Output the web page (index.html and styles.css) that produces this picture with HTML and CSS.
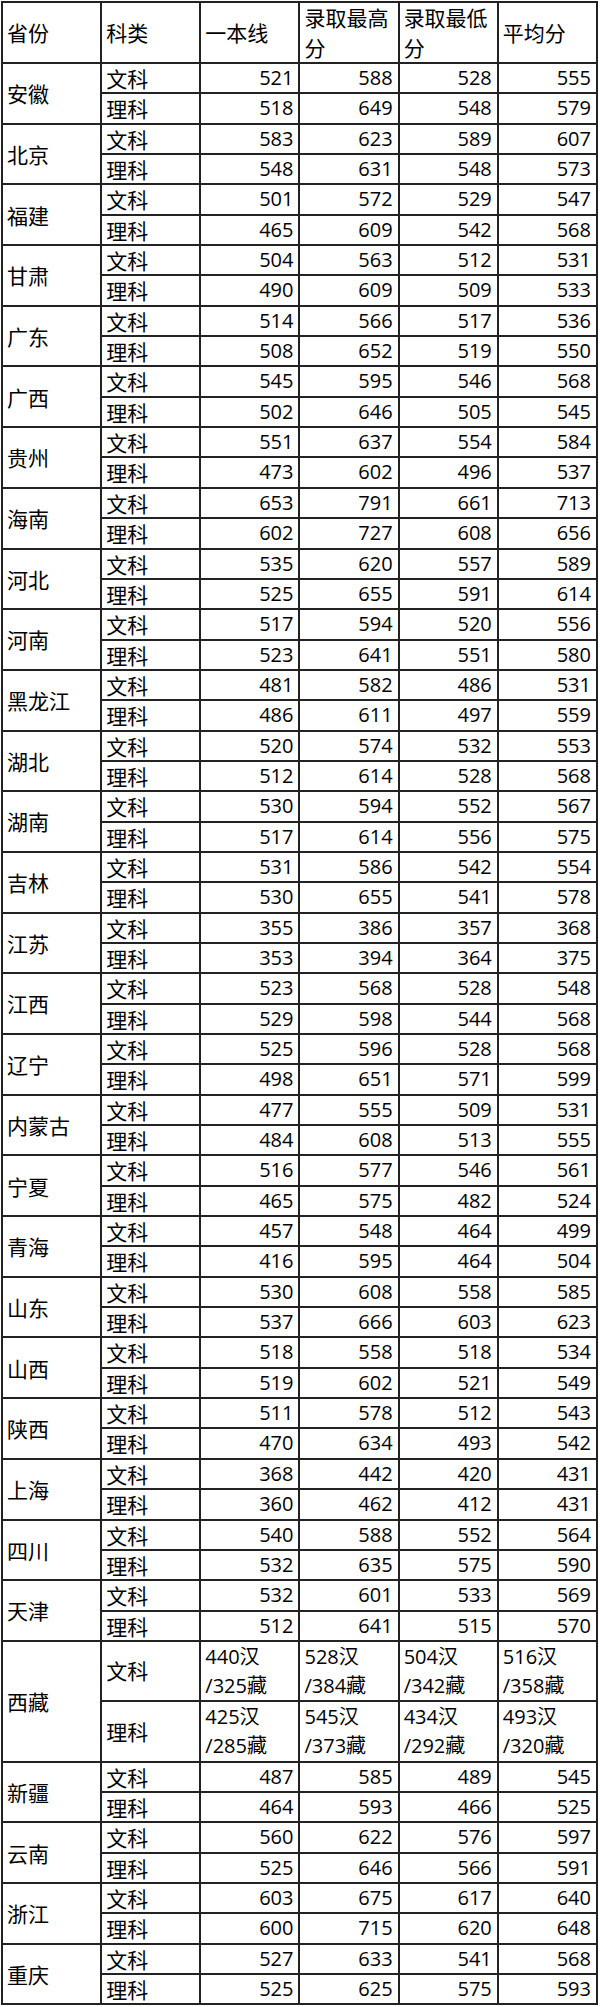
FILE: index.html
```html
<!DOCTYPE html>
<html lang="zh-CN">
<head>
<meta charset="utf-8">
<title>各省录取分数</title>
<link rel="stylesheet" href="styles.css">
</head>
<body>
<table class="scores">
<colgroup><col><col><col><col><col><col></colgroup>
<thead>
<tr class="head"><th>省份</th><th>科类</th><th>一本线</th><th>录取最高分</th><th>录取最低分</th><th>平均分</th></tr>
</thead>
<tbody>
<tr><td class="prov" rowspan="2">安徽</td><td class="zh">文科</td><td>521</td><td>588</td><td>528</td><td>555</td></tr>
<tr><td class="zh">理科</td><td>518</td><td>649</td><td>548</td><td>579</td></tr>
<tr><td class="prov" rowspan="2">北京</td><td class="zh">文科</td><td>583</td><td>623</td><td>589</td><td>607</td></tr>
<tr><td class="zh">理科</td><td>548</td><td>631</td><td>548</td><td>573</td></tr>
<tr><td class="prov" rowspan="2">福建</td><td class="zh">文科</td><td>501</td><td>572</td><td>529</td><td>547</td></tr>
<tr><td class="zh">理科</td><td>465</td><td>609</td><td>542</td><td>568</td></tr>
<tr><td class="prov" rowspan="2">甘肃</td><td class="zh">文科</td><td>504</td><td>563</td><td>512</td><td>531</td></tr>
<tr><td class="zh">理科</td><td>490</td><td>609</td><td>509</td><td>533</td></tr>
<tr><td class="prov" rowspan="2">广东</td><td class="zh">文科</td><td>514</td><td>566</td><td>517</td><td>536</td></tr>
<tr><td class="zh">理科</td><td>508</td><td>652</td><td>519</td><td>550</td></tr>
<tr><td class="prov" rowspan="2">广西</td><td class="zh">文科</td><td>545</td><td>595</td><td>546</td><td>568</td></tr>
<tr><td class="zh">理科</td><td>502</td><td>646</td><td>505</td><td>545</td></tr>
<tr><td class="prov" rowspan="2">贵州</td><td class="zh">文科</td><td>551</td><td>637</td><td>554</td><td>584</td></tr>
<tr><td class="zh">理科</td><td>473</td><td>602</td><td>496</td><td>537</td></tr>
<tr><td class="prov" rowspan="2">海南</td><td class="zh">文科</td><td>653</td><td>791</td><td>661</td><td>713</td></tr>
<tr><td class="zh">理科</td><td>602</td><td>727</td><td>608</td><td>656</td></tr>
<tr><td class="prov" rowspan="2">河北</td><td class="zh">文科</td><td>535</td><td>620</td><td>557</td><td>589</td></tr>
<tr><td class="zh">理科</td><td>525</td><td>655</td><td>591</td><td>614</td></tr>
<tr><td class="prov" rowspan="2">河南</td><td class="zh">文科</td><td>517</td><td>594</td><td>520</td><td>556</td></tr>
<tr><td class="zh">理科</td><td>523</td><td>641</td><td>551</td><td>580</td></tr>
<tr><td class="prov" rowspan="2">黑龙江</td><td class="zh">文科</td><td>481</td><td>582</td><td>486</td><td>531</td></tr>
<tr><td class="zh">理科</td><td>486</td><td>611</td><td>497</td><td>559</td></tr>
<tr><td class="prov" rowspan="2">湖北</td><td class="zh">文科</td><td>520</td><td>574</td><td>532</td><td>553</td></tr>
<tr><td class="zh">理科</td><td>512</td><td>614</td><td>528</td><td>568</td></tr>
<tr><td class="prov" rowspan="2">湖南</td><td class="zh">文科</td><td>530</td><td>594</td><td>552</td><td>567</td></tr>
<tr><td class="zh">理科</td><td>517</td><td>614</td><td>556</td><td>575</td></tr>
<tr><td class="prov" rowspan="2">吉林</td><td class="zh">文科</td><td>531</td><td>586</td><td>542</td><td>554</td></tr>
<tr><td class="zh">理科</td><td>530</td><td>655</td><td>541</td><td>578</td></tr>
<tr><td class="prov" rowspan="2">江苏</td><td class="zh">文科</td><td>355</td><td>386</td><td>357</td><td>368</td></tr>
<tr><td class="zh">理科</td><td>353</td><td>394</td><td>364</td><td>375</td></tr>
<tr><td class="prov" rowspan="2">江西</td><td class="zh">文科</td><td>523</td><td>568</td><td>528</td><td>548</td></tr>
<tr><td class="zh">理科</td><td>529</td><td>598</td><td>544</td><td>568</td></tr>
<tr><td class="prov" rowspan="2">辽宁</td><td class="zh">文科</td><td>525</td><td>596</td><td>528</td><td>568</td></tr>
<tr><td class="zh">理科</td><td>498</td><td>651</td><td>571</td><td>599</td></tr>
<tr><td class="prov" rowspan="2">内蒙古</td><td class="zh">文科</td><td>477</td><td>555</td><td>509</td><td>531</td></tr>
<tr><td class="zh">理科</td><td>484</td><td>608</td><td>513</td><td>555</td></tr>
<tr><td class="prov" rowspan="2">宁夏</td><td class="zh">文科</td><td>516</td><td>577</td><td>546</td><td>561</td></tr>
<tr><td class="zh">理科</td><td>465</td><td>575</td><td>482</td><td>524</td></tr>
<tr><td class="prov" rowspan="2">青海</td><td class="zh">文科</td><td>457</td><td>548</td><td>464</td><td>499</td></tr>
<tr><td class="zh">理科</td><td>416</td><td>595</td><td>464</td><td>504</td></tr>
<tr><td class="prov" rowspan="2">山东</td><td class="zh">文科</td><td>530</td><td>608</td><td>558</td><td>585</td></tr>
<tr><td class="zh">理科</td><td>537</td><td>666</td><td>603</td><td>623</td></tr>
<tr><td class="prov" rowspan="2">山西</td><td class="zh">文科</td><td>518</td><td>558</td><td>518</td><td>534</td></tr>
<tr><td class="zh">理科</td><td>519</td><td>602</td><td>521</td><td>549</td></tr>
<tr><td class="prov" rowspan="2">陕西</td><td class="zh">文科</td><td>511</td><td>578</td><td>512</td><td>543</td></tr>
<tr><td class="zh">理科</td><td>470</td><td>634</td><td>493</td><td>542</td></tr>
<tr><td class="prov" rowspan="2">上海</td><td class="zh">文科</td><td>368</td><td>442</td><td>420</td><td>431</td></tr>
<tr><td class="zh">理科</td><td>360</td><td>462</td><td>412</td><td>431</td></tr>
<tr><td class="prov" rowspan="2">四川</td><td class="zh">文科</td><td>540</td><td>588</td><td>552</td><td>564</td></tr>
<tr><td class="zh">理科</td><td>532</td><td>635</td><td>575</td><td>590</td></tr>
<tr><td class="prov" rowspan="2">天津</td><td class="zh">文科</td><td>532</td><td>601</td><td>533</td><td>569</td></tr>
<tr><td class="zh">理科</td><td>512</td><td>641</td><td>515</td><td>570</td></tr>
<tr class="tall"><td class="prov" rowspan="2">西藏</td><td class="zh">文科</td><td class="mix">440汉<br>/325藏</td><td class="mix">528汉<br>/384藏</td><td class="mix">504汉<br>/342藏</td><td class="mix">516汉<br>/358藏</td></tr>
<tr class="tall"><td class="zh">理科</td><td class="mix">425汉<br>/285藏</td><td class="mix">545汉<br>/373藏</td><td class="mix">434汉<br>/292藏</td><td class="mix">493汉<br>/320藏</td></tr>
<tr><td class="prov" rowspan="2">新疆</td><td class="zh">文科</td><td>487</td><td>585</td><td>489</td><td>545</td></tr>
<tr><td class="zh">理科</td><td>464</td><td>593</td><td>466</td><td>525</td></tr>
<tr><td class="prov" rowspan="2">云南</td><td class="zh">文科</td><td>560</td><td>622</td><td>576</td><td>597</td></tr>
<tr><td class="zh">理科</td><td>525</td><td>646</td><td>566</td><td>591</td></tr>
<tr><td class="prov" rowspan="2">浙江</td><td class="zh">文科</td><td>603</td><td>675</td><td>617</td><td>640</td></tr>
<tr><td class="zh">理科</td><td>600</td><td>715</td><td>620</td><td>648</td></tr>
<tr><td class="prov" rowspan="2">重庆</td><td class="zh">文科</td><td>527</td><td>633</td><td>541</td><td>568</td></tr>
<tr><td class="zh">理科</td><td>525</td><td>625</td><td>575</td><td>593</td></tr>
</tbody>
</table>
</body>
</html>
```

FILE: styles.css
```css
html, body {
  margin: 0;
  background: #ffffff;
}

body {
  padding: 1px 0 0 1px;
  color: #000000;
  font-family: "Open Sans", "Noto Sans CJK SC", sans-serif;
}

.scores {
  border-collapse: collapse;
  table-layout: fixed;
  width: 597px;
}

.scores th,
.scores td {
  border: 2px solid #222222;
  padding: 0 5px 0 4px;
  vertical-align: middle;
}

.scores th {
  font-family: "Noto Sans CJK SC", sans-serif;
  font-size: 21px;
  font-weight: normal;
  line-height: 29.5px;
  text-align: left;
}

.scores td {
  font-size: 20px;
  line-height: 28.35px;
  text-align: right;
}

.scores td.zh,
.scores td.prov {
  font-family: "Noto Sans CJK SC", sans-serif;
  font-size: 21px;
  text-align: left;
}

.scores .tall td {
  line-height: 29.2px;
}

.scores td.mix {
  text-align: left;
}
```
